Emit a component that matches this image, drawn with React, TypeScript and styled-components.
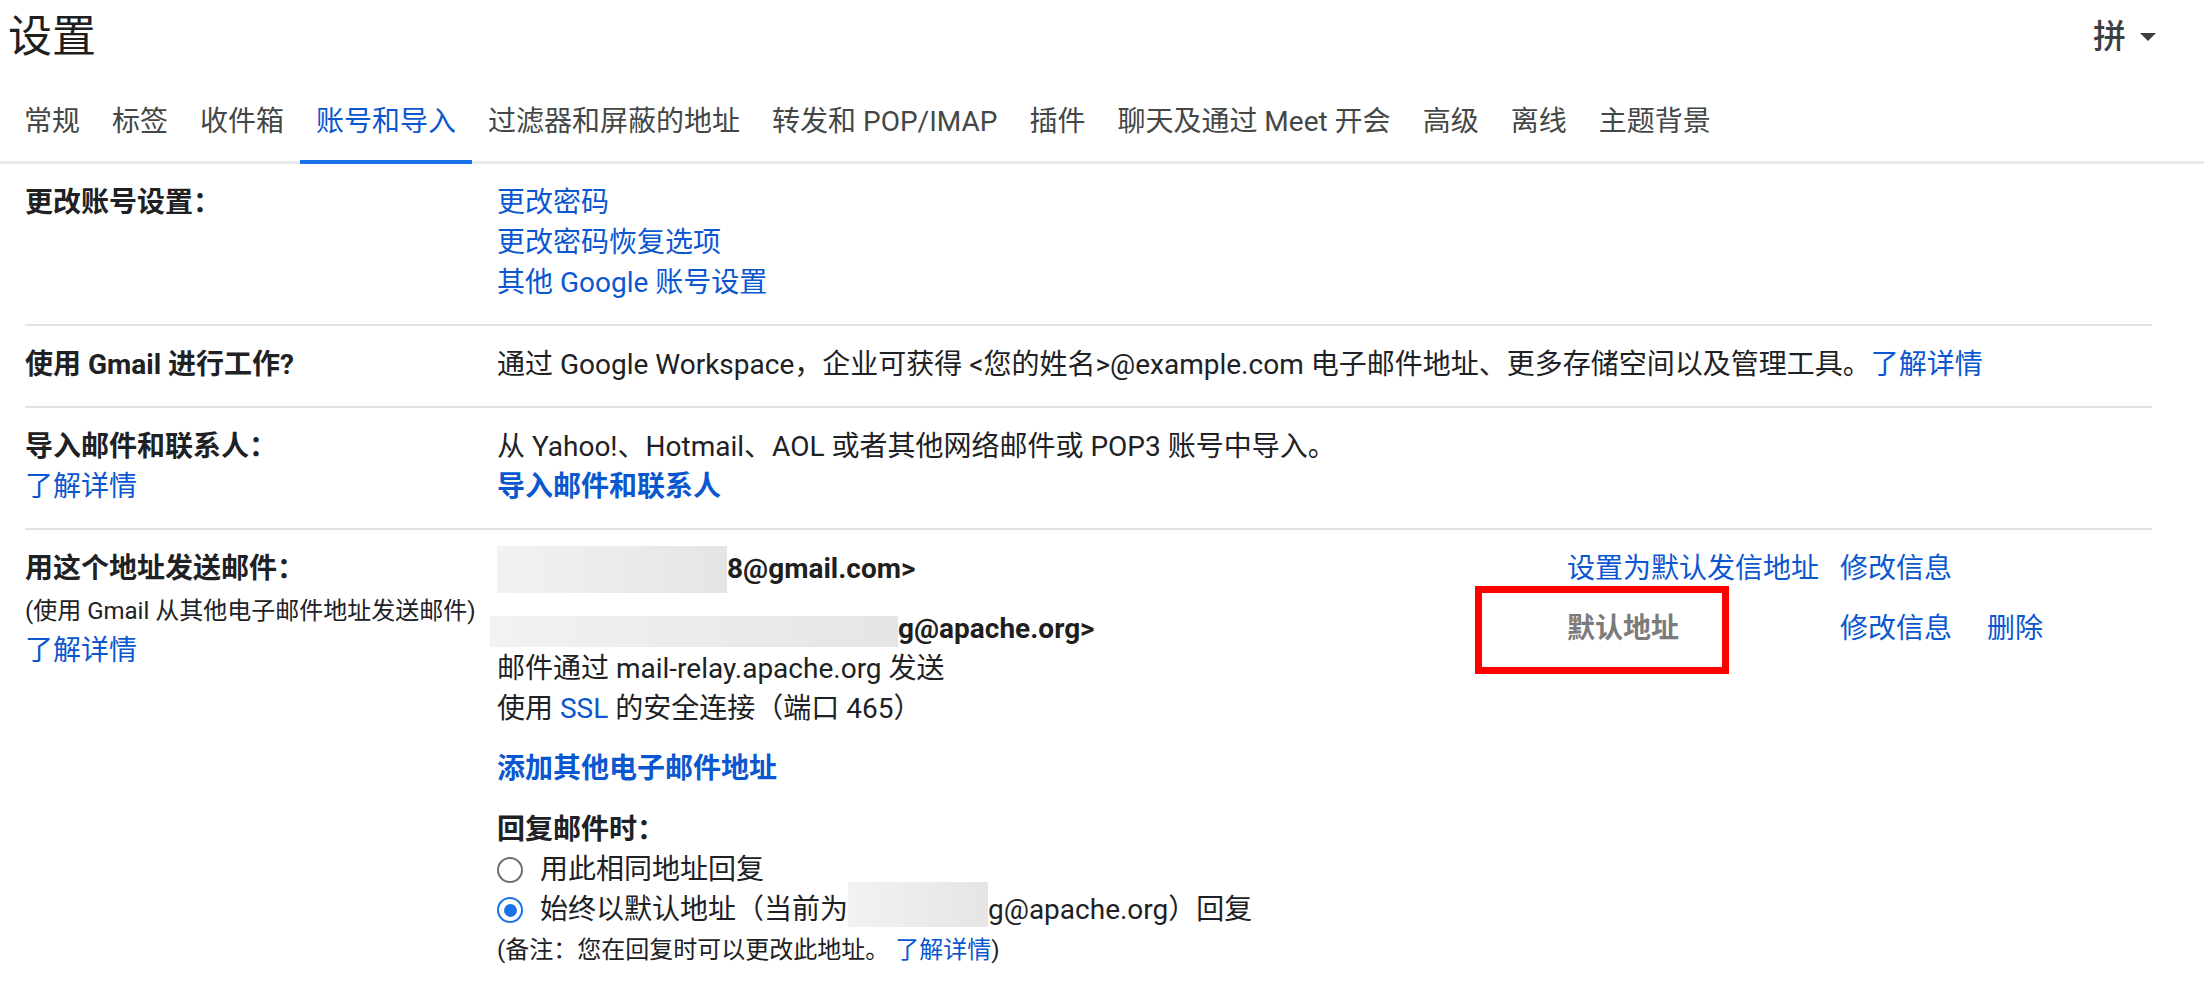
import React from 'react'
import styled, { createGlobalStyle } from 'styled-components'

const GlobalStyle = createGlobalStyle`
    html, body {
        margin: 0;
        padding: 0;
        background: #ffffff;
    }
    body {
        font-family: Roboto, "Noto Sans CJK SC", sans-serif;
        color: #202124;
    }
`

const Page = styled.div`
    width: 2204px;
    height: 986px;
    overflow: hidden;
    font-size: 28px;
    line-height: 40px;
`

const TopBar = styled.header`
    display: flex;
    align-items: center;
    justify-content: space-between;
    height: 74px;
    padding: 0 48px 0 8px;
`

const Title = styled.h1`
    margin: 0;
    font-size: 44px;
    font-weight: 400;
    line-height: 52px;
    color: #1f1f1f;
`

const InputTool = styled.div`
    display: flex;
    align-items: center;
    gap: 14px;
    font-size: 33px;
    font-weight: 500;
    color: #3c4043;
`

const Caret = styled.span`
    width: 0;
    height: 0;
    border-left: 8px solid transparent;
    border-right: 8px solid transparent;
    border-top: 8px solid #3c4043;
`

const TabBar = styled.nav`
    display: flex;
    margin-top: 10px;
    padding-left: 8px;
    border-bottom: 3px solid #e8eaed;
`

const Tab = styled.div<{ $active?: boolean }>`
    display: flex;
    align-items: center;
    height: 76px;
    padding: 0 16px;
    margin-bottom: -3px;
    white-space: nowrap;
    color: ${props => props.$active ? '#0b57d0' : '#444746'};
    border-bottom: 4px solid ${props => props.$active ? '#1a73e8' : 'transparent'};
`

const Settings = styled.section`
    margin-left: 25px;
    width: 2127px;
`

const Row = styled.div`
    display: grid;
    grid-template-columns: 472px 1fr;
    padding: 19px 0 21px;
    & + & {
        border-top: 2px solid #e3e3e3;
    }
`

const Label = styled.div`
    font-weight: 700;
`

const Stack = styled.div`
    display: flex;
    flex-direction: column;
    align-items: flex-start;
`

const Note = styled.div<{ $lift?: number }>`
    font-size: 24px;
    line-height: 40px;
    margin-top: ${props => props.$lift ?? 0}px;
`

const Link = styled.a<{ $bold?: boolean }>`
    color: #0b57d0;
    text-decoration: none;
    font-weight: ${props => props.$bold ? 700 : 400};
    cursor: pointer;
`

const Redacted = styled.span<{ $w: number; $h: number; $dy: number; $dx?: number }>`
    display: inline-block;
    vertical-align: top;
    width: ${props => props.$w}px;
    height: ${props => props.$h}px;
    margin-top: ${props => props.$dy}px;
    margin-bottom: ${props => 40 - props.$h - props.$dy}px;
    margin-left: ${props => props.$dx ?? 0}px;
    background: linear-gradient(90deg, #f2f2f4, #e5e5e6);
`

const Address = styled.span`
    font-weight: 700;
    color: #1f1f1f;
`

const SendAsTable = styled.div`
    display: grid;
    grid-template-columns: 1070px 273px 147px 1fr;
    row-gap: 20px;
`

const Cell = styled.div`
    position: relative;
    white-space: nowrap;
`

const DefaultTag = styled.span`
    color: #7b7b7b;
    font-weight: 700;
`

const Highlight = styled.span`
    position: absolute;
    left: -92px;
    top: -23px;
    width: 254px;
    height: 88px;
    box-sizing: border-box;
    border: 7px solid #ff0000;
    pointer-events: none;
`

const Block = styled.div<{ $gap: number }>`
    margin-top: ${props => props.$gap}px;
`

const RadioRow = styled.label`
    display: flex;
    align-items: center;
    gap: 17px;
    white-space: nowrap;
`

const RadioDot = styled.span<{ $checked?: boolean }>`
    display: inline-flex;
    align-items: center;
    justify-content: center;
    width: 26px;
    height: 26px;
    box-sizing: border-box;
    border-radius: 50%;
    border: 2.5px solid ${props => props.$checked ? '#1a73e8' : '#6f6f6f'};
    &::after {
        content: '';
        width: 13px;
        height: 13px;
        border-radius: 50%;
        background: ${props => props.$checked ? '#1a73e8' : 'transparent'};
    }
`

const tabs = ['常规', '标签', '收件箱', '账号和导入', '过滤器和屏蔽的地址', '转发和 POP/IMAP', '插件', '聊天及通过 Meet 开会', '高级', '离线', '主题背景']

export default function App() {
    return (
        <Page>
            <GlobalStyle />
            <TopBar>
                <Title>设置</Title>
                <InputTool>拼<Caret /></InputTool>
            </TopBar>
            <TabBar>
                {tabs.map(t => <Tab key={t} $active={t === '账号和导入'}>{t}</Tab>)}
            </TabBar>
            <Settings>
                <Row>
                    <Label>更改账号设置：</Label>
                    <Stack>
                        <Link>更改密码</Link>
                        <Link>更改密码恢复选项</Link>
                        <Link>其他 Google 账号设置</Link>
                    </Stack>
                </Row>
                <Row>
                    <Label>使用 Gmail 进行工作?</Label>
                    <div>
                        通过 Google Workspace，企业可获得 &lt;您的姓名&gt;@example.com 电子邮件地址、更多存储空间以及管理工具。<Link>了解详情</Link>
                    </div>
                </Row>
                <Row>
                    <Stack>
                        <Label>导入邮件和联系人：</Label>
                        <Link>了解详情</Link>
                    </Stack>
                    <Stack>
                        <div>从 Yahoo!、Hotmail、AOL 或者其他网络邮件或 POP3 账号中导入。</div>
                        <Link $bold>导入邮件和联系人</Link>
                    </Stack>
                </Row>
                <Row>
                    <Stack>
                        <Label>用这个地址发送邮件：</Label>
                        <Note $lift={2}>(使用 Gmail 从其他电子邮件地址发送邮件)</Note>
                        <Link>了解详情</Link>
                    </Stack>
                    <div>
                        <SendAsTable>
                            <Cell>
                                <Redacted $w={230} $h={47} $dy={-3} />
                                <Address>8@gmail.com&gt;</Address>
                            </Cell>
                            <Cell><Link>设置为默认发信地址</Link></Cell>
                            <Cell><Link>修改信息</Link></Cell>
                            <Cell />
                            <Cell>
                                <div>
                                    <Redacted $w={408} $h={31} $dy={7} $dx={-7} />
                                    <Address>g@apache.org&gt;</Address>
                                </div>
                                <div>邮件通过 mail-relay.apache.org 发送</div>
                                <div>使用 <Link>SSL</Link> 的安全连接（端口 465）</div>
                            </Cell>
                            <Cell>
                                <DefaultTag>默认地址</DefaultTag>
                                <Highlight />
                            </Cell>
                            <Cell><Link>修改信息</Link></Cell>
                            <Cell><Link>删除</Link></Cell>
                        </SendAsTable>
                        <Block $gap={20}>
                            <Link $bold>添加其他电子邮件地址</Link>
                        </Block>
                        <Block $gap={21}>
                            <Label>回复邮件时：</Label>
                            <RadioRow>
                                <RadioDot />
                                用此相同地址回复
                            </RadioRow>
                            <RadioRow>
                                <RadioDot $checked />
                                <span>
                                    始终以默认地址（当前为<Redacted $w={140} $h={45} $dy={-8} />g@apache.org）回复
                                </span>
                            </RadioRow>
                            <Note>(备注：您在回复时可以更改此地址。 <Link>了解详情</Link>)</Note>
                        </Block>
                    </div>
                </Row>
            </Settings>
        </Page>
    )
}
